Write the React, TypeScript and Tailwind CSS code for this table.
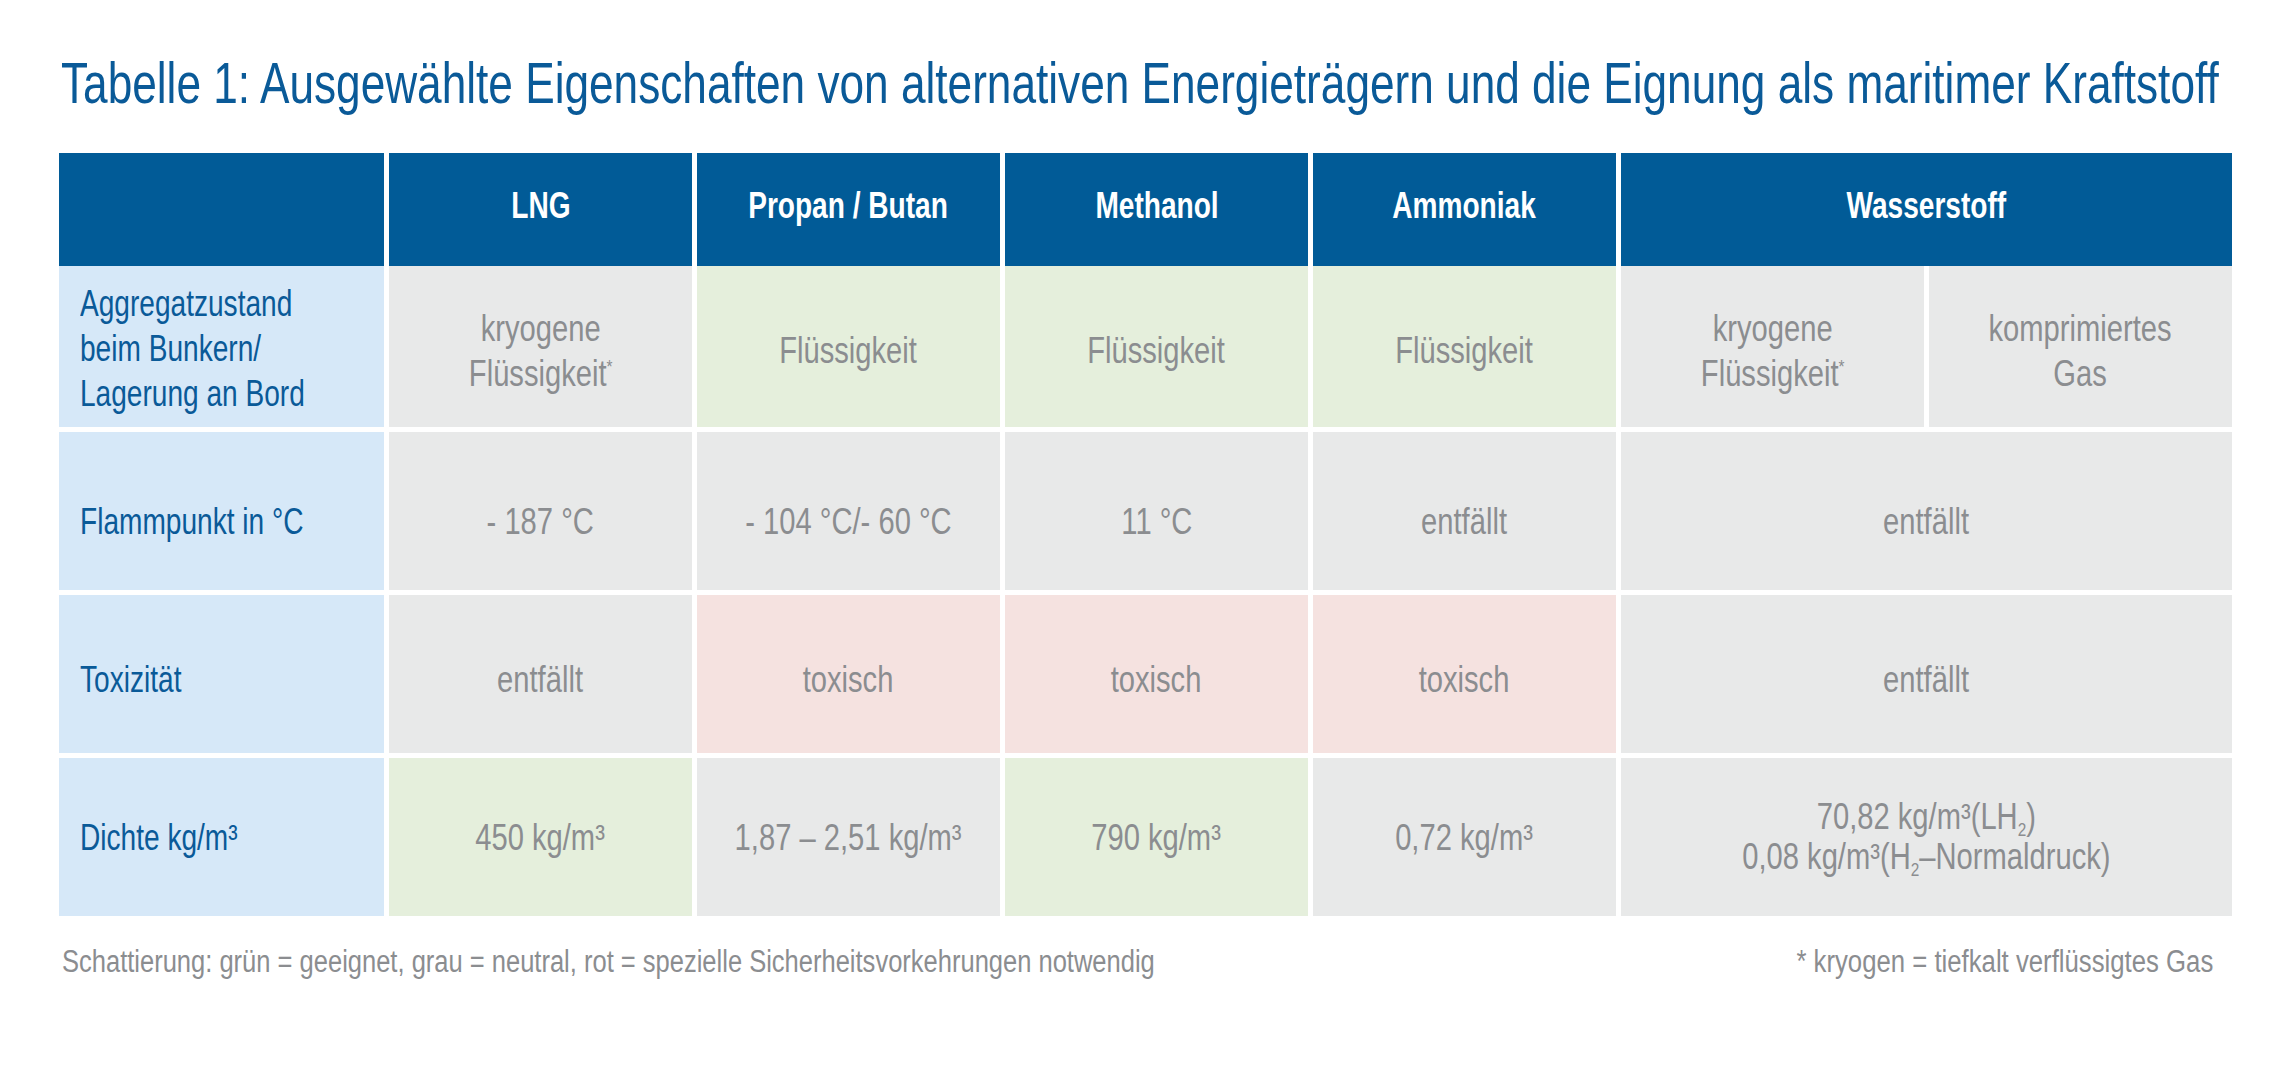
import React from "react";

const F = "font-['Liberation_Sans',Arial,sans-serif]";

function Sup({ children }: { children: React.ReactNode }) {
  return <span className="relative -top-[13px] text-[19px] leading-none">{children}</span>;
}
function Sub({ children }: { children: React.ReactNode }) {
  return <span className="relative top-[7px] text-[19px] leading-none">{children}</span>;
}

function Cell({
  bg,
  pad,
  span,
  children,
}: {
  bg: string;
  pad: string;
  span?: string;
  children?: React.ReactNode;
}) {
  return (
    <div
      className={`flex items-center justify-center text-center text-[36px] leading-[45px] text-[#8b8d90] ${bg} ${pad} ${span ?? ""}`}
    >
      <div className="origin-center scale-x-[0.81] whitespace-nowrap">{children}</div>
    </div>
  );
}

function Label({ pad, children }: { pad: string; children: React.ReactNode }) {
  return (
    <div
      className={`flex items-center bg-[#d6e8f8] pl-[21px] text-[36px] leading-[45px] text-[#0a5a98] ${pad}`}
    >
      <div className="origin-left scale-x-[0.78] whitespace-nowrap">{children}</div>
    </div>
  );
}

function Head({ span, children }: { span?: string; children: React.ReactNode }) {
  return (
    <div
      className={`flex items-center justify-center bg-[#015b97] pb-[8px] text-[36px] font-bold leading-[45px] text-white ${span ?? ""}`}
    >
      <span className="inline-block origin-center scale-x-[0.78] whitespace-nowrap">{children}</span>
    </div>
  );
}

const GRAY = "bg-[#e8e9e9]";
const GREEN = "bg-[#e5efdc]";
const PINK = "bg-[#f5e2e0]";

export default function App() {
  const headers = ["LNG", "Propan / Butan", "Methanol", "Ammoniak"];
  return (
    <div className={`w-[2291px] h-[1075px] overflow-hidden bg-white ${F}`}>
      <div className="flex flex-col pl-[59px] pt-[55px]">
        <h1 className="ml-[2px] w-max origin-left scale-x-[0.775] whitespace-nowrap text-[57px] leading-[57px] text-[#0a5a98]">
          Tabelle 1: Ausgewählte Eigenschaften von alternativen Energieträgern und die Eignung als maritimer Kraftstoff
        </h1>

        <div className="mt-[41px] w-[2173px]">
          {/* header */}
          <div className="grid h-[113px] grid-cols-[325px_repeat(6,303px)] gap-x-[5px]">
            <div className="bg-[#015b97]" />
            {headers.map((h) => (
              <Head key={h}>{h}</Head>
            ))}
            <Head span="col-span-2">Wasserstoff</Head>
          </div>

          {/* body */}
          <div className="grid grid-cols-[325px_repeat(6,303px)] grid-rows-[161px_158px_158px_158px] gap-x-[5px] gap-y-[5px]">
            {/* row 1 */}
            <Label pad="pt-[3px]">
              Aggregatzustand
              <br />
              beim Bunkern/
              <br />
              Lagerung an Bord
            </Label>
            <Cell bg={GRAY} pad="pt-[8px]">
              kryogene
              <br />
              Flüssigkeit<Sup>*</Sup>
            </Cell>
            <Cell bg={GREEN} pad="pt-[8px]">Flüssigkeit</Cell>
            <Cell bg={GREEN} pad="pt-[8px]">Flüssigkeit</Cell>
            <Cell bg={GREEN} pad="pt-[8px]">Flüssigkeit</Cell>
            <Cell bg={GRAY} pad="pt-[8px]">
              kryogene
              <br />
              Flüssigkeit<Sup>*</Sup>
            </Cell>
            <Cell bg={GRAY} pad="pt-[8px]">
              komprimiertes
              <br />
              Gas
            </Cell>

            {/* row 2 */}
            <Label pad="pt-[20px]">Flammpunkt in °C</Label>
            <Cell bg={GRAY} pad="pt-[20px]">- 187 °C</Cell>
            <Cell bg={GRAY} pad="pt-[20px]">- 104 °C/- 60 °C</Cell>
            <Cell bg={GRAY} pad="pt-[20px]">11 °C</Cell>
            <Cell bg={GRAY} pad="pt-[20px]">entfällt</Cell>
            <Cell bg={GRAY} pad="pt-[20px]" span="col-span-2">
              entfällt
            </Cell>

            {/* row 3 */}
            <Label pad="pt-[10px]">Toxizität</Label>
            <Cell bg={GRAY} pad="pt-[10px]">entfällt</Cell>
            <Cell bg={PINK} pad="pt-[10px]">toxisch</Cell>
            <Cell bg={PINK} pad="pt-[10px]">toxisch</Cell>
            <Cell bg={PINK} pad="pt-[10px]">toxisch</Cell>
            <Cell bg={GRAY} pad="pt-[10px]" span="col-span-2">
              entfällt
            </Cell>

            {/* row 4 */}
            <Label pad="pt-0">Dichte kg/m³</Label>
            <Cell bg={GREEN} pad="pt-0">450 kg/m³</Cell>
            <Cell bg={GRAY} pad="pt-0">1,87 – 2,51 kg/m³</Cell>
            <Cell bg={GREEN} pad="pt-0">790 kg/m³</Cell>
            <Cell bg={GRAY} pad="pt-0">0,72 kg/m³</Cell>
            <div className={`col-span-2 flex items-center justify-center text-center text-[36px] leading-[40px] text-[#8b8d90] ${GRAY}`}>
              <div className="origin-center scale-x-[0.81] whitespace-nowrap">
                70,82 kg/m³(LH<Sub>2</Sub>)
                <br />
                0,08 kg/m³(H<Sub>2</Sub>–Normaldruck)
              </div>
            </div>
          </div>

          {/* footer */}
          <div className="mt-[30px] flex justify-between pl-[3px] pr-[19px] text-[31px] leading-[31px] text-[#8b8d90]">
            <span className="inline-block origin-left scale-x-[0.823] whitespace-nowrap">
              Schattierung: grün = geeignet, grau = neutral, rot = spezielle Sicherheitsvorkehrungen notwendig
            </span>
            <span className="inline-block origin-right scale-x-[0.83] whitespace-nowrap">
              * kryogen = tiefkalt verflüssigtes Gas
            </span>
          </div>
        </div>
      </div>
    </div>
  );
}
